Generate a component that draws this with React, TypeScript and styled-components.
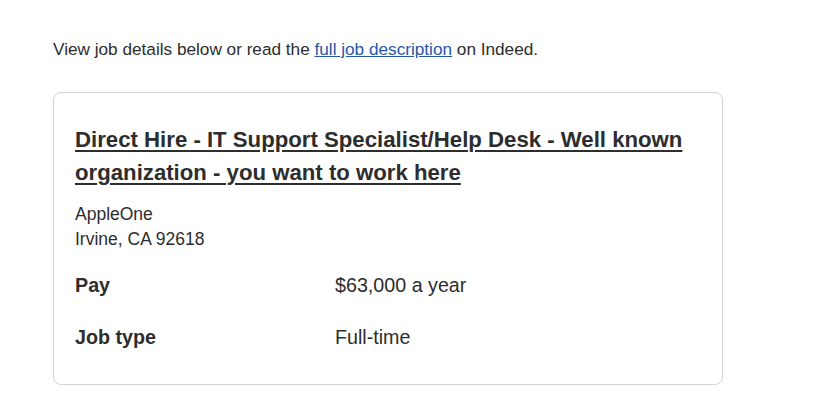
import React from "react";
import styled, { createGlobalStyle } from "styled-components";

const GlobalStyle = createGlobalStyle`
  html, body {
    margin: 0;
    padding: 0;
    background: #ffffff;
  }
  body {
    font-family: "Liberation Sans", Arial, Helvetica, sans-serif;
    color: #2d2d2d;
  }
`;

const Page = styled.main`
  padding: 37px 0 0 53px;
  width: 670px;
`;

const Intro = styled.p`
  margin: 0 0 31px 0;
  font-size: 17.2px;
  line-height: 24px;
  color: #2d2d2d;
`;

const Link = styled.a`
  color: #2557a7;
  text-decoration: underline;
`;

const Card = styled.section`
  border: 1px solid #d4d2d0;
  border-radius: 8px;
  padding: 30px 21px 33px 21px;
  display: flex;
  flex-direction: column;
`;

const Title = styled.h2`
  margin: 0 0 13px 0;
  font-size: 22.2px;
  line-height: 33px;
  font-weight: 700;
  color: #2d2d2d;
  text-decoration: underline;
  text-underline-offset: 3px;
`;

const Meta = styled.div`
  font-size: 17.5px;
  line-height: 25px;
  color: #2d2d2d;
  margin-bottom: 20px;
`;

const Details = styled.dl`
  margin: 0;
  display: grid;
  grid-template-columns: 260px 1fr;
  row-gap: 25px;
  font-size: 19.7px;
  line-height: 27px;
`;

const Label = styled.dt`
  margin: 0;
  font-weight: 700;
  color: #2d2d2d;
`;

const Value = styled.dd`
  margin: 0;
  color: #2d2d2d;
`;

const details = [
  { label: "Pay", value: "$63,000 a year" },
  { label: "Job type", value: "Full-time" },
];

export default function App() {
  return (
    <>
      <GlobalStyle />
      <Page>
        <Intro>
          View job details below or read the <Link href="#">full job description</Link> on Indeed.
        </Intro>
        <Card>
          <Title>
            Direct Hire - IT Support Specialist/Help Desk - Well known organization - you want to work here
          </Title>
          <Meta>
            <div>AppleOne</div>
            <div>Irvine, CA 92618</div>
          </Meta>
          <Details>
            {details.map((d) => (
              <React.Fragment key={d.label}>
                <Label>{d.label}</Label>
                <Value>{d.value}</Value>
              </React.Fragment>
            ))}
          </Details>
        </Card>
      </Page>
    </>
  );
}
